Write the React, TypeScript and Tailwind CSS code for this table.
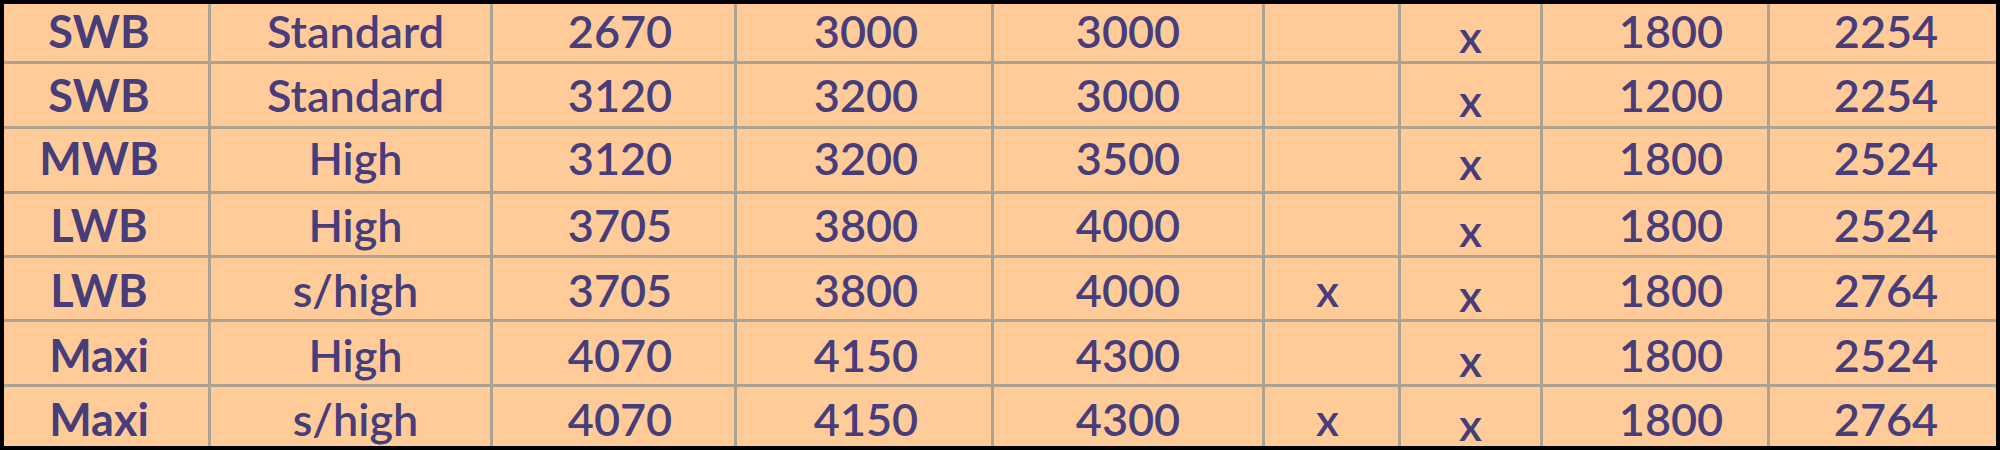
import React from "react";

// wheelbase / roof height / dimensions table
const rows: string[][] = [
  ["SWB", "Standard", "2670", "3000", "3000", "", "x", "1800", "2254"],
  ["SWB", "Standard", "3120", "3200", "3000", "", "x", "1200", "2254"],
  ["MWB", "High", "3120", "3200", "3500", "", "x", "1800", "2524"],
  ["LWB", "High", "3705", "3800", "4000", "", "x", "1800", "2524"],
  ["LWB", "s/high", "3705", "3800", "4000", "x", "x", "1800", "2764"],
  ["Maxi", "High", "4070", "4150", "4300", "", "x", "1800", "2524"],
  ["Maxi", "s/high", "4070", "4150", "4300", "x", "x", "1800", "2764"],
];

// padding-top per row so the text sits where it does in the sheet
const rowPad = [
  "pt-[5px]",
  "pt-[9px]",
  "pt-[7px]",
  "pt-[9px]",
  "pt-[10px]",
  "pt-[11px]",
  "pt-[10px]",
];

// horizontal nudges + weight per column
const colText = [
  "pr-[14px] font-bold",
  "pl-[10px] font-semibold",
  "pl-[13px] font-semibold",
  "pl-[4px] font-semibold",
  "font-semibold",
  "pr-[8px] font-semibold",
  "font-semibold",
  "pl-[32px] font-semibold",
  "pl-[6px] font-semibold",
];

const colSpan = ["", "", "", "", "", "", "mt-[5px]", "", ""];

const App: React.FC = () => {
  return (
    <div className="w-[2000px] h-[450px] bg-black p-[4px] font-['Lato','Liberation_Sans',sans-serif]">
      <div className="grid grid-cols-[204px_279px_241px_254px_268px_133px_139px_224px_226px] grid-rows-[57px_62px_62px_61px_61px_62px_59px] gap-[3px] bg-[#ada395] h-[442px]">
        {rows.map((row, r) =>
          row.map((cell, c) => (
            <div
              key={`${r}-${c}`}
              className={`bg-[#ffcc99] flex flex-col items-center text-[45px] leading-none text-[#483d7b] ${rowPad[r]} ${colText[c]}`}
            >
              <span className={colSpan[c]}>{cell}</span>
            </div>
          ))
        )}
      </div>
    </div>
  );
};

export default App;
